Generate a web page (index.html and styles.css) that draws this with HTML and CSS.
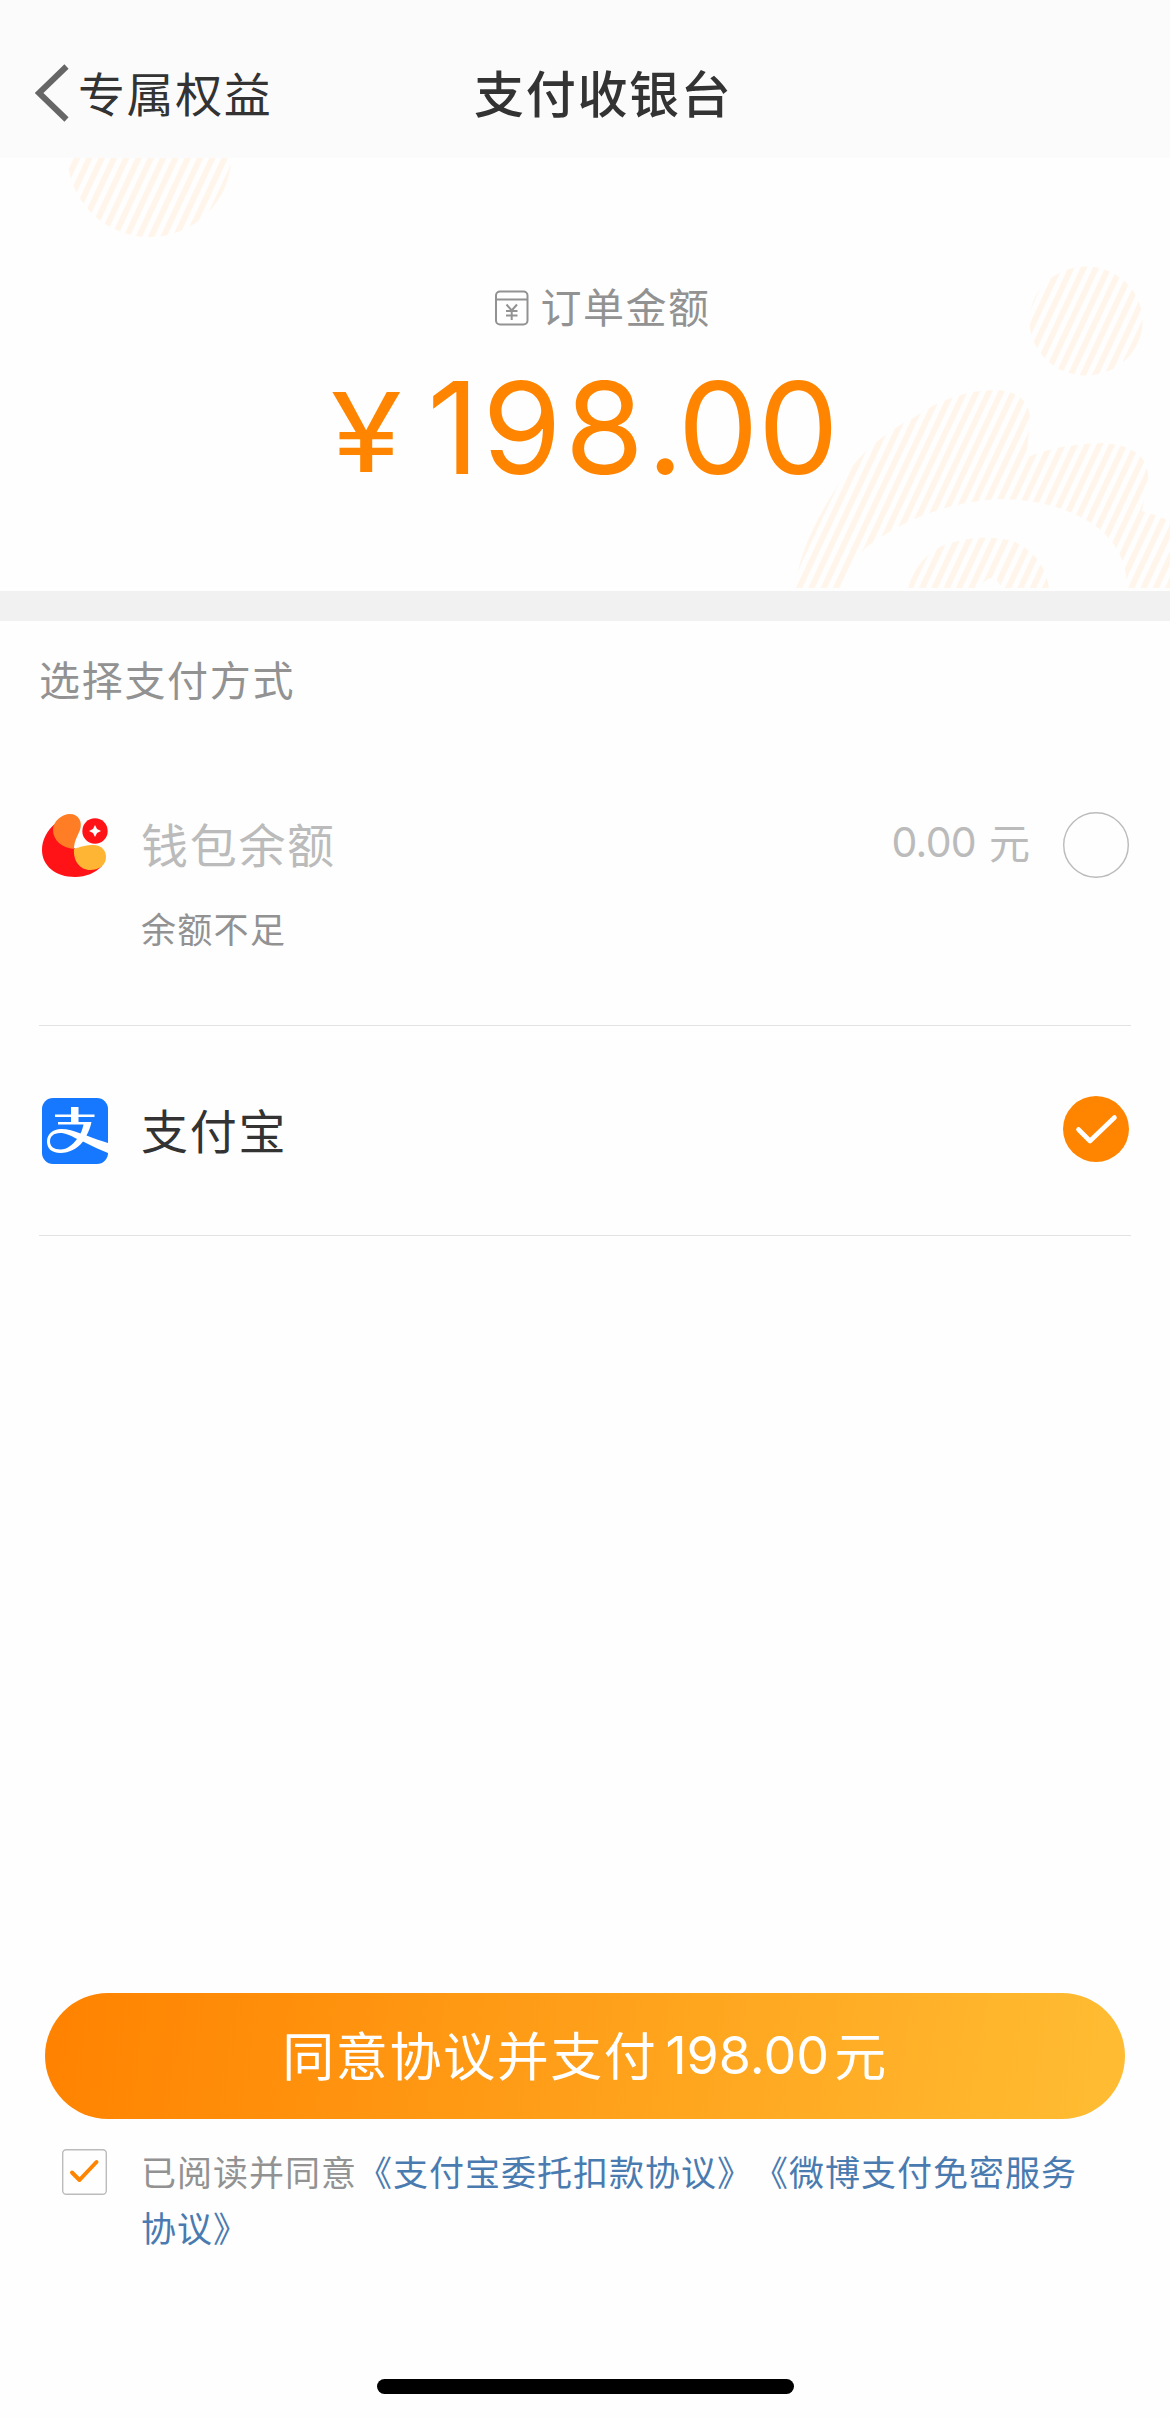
FILE: index.html
```html
<!DOCTYPE html>
<html lang="zh-CN">
<head>
<meta charset="utf-8">
<title>支付收银台</title>
<link rel="stylesheet" href="styles.css">
</head>
<body>
<div class="page">
  <header class="nav">
    <a class="back">
      <svg class="back-icon" viewBox="0 0 34 58"><path d="M31.500 2.500L4 29L31.500 55.500" fill="none" stroke="#666" stroke-width="6"/></svg>
      <span class="back-text">专属权益</span>
    </a>
    <h1 class="title">支付收银台</h1>
  </header>

  <section class="summary">
    <svg class="decor" viewBox="0 158 1170 430">
      <defs>
        <pattern id="stripes" width="12.300" height="20" patternUnits="userSpaceOnUse" patternTransform="skewX(-25)">
          <rect width="6.400" height="20" fill="#fff5ea"/>
        </pattern>
      </defs>
      <g fill="url(#stripes)">
        <circle cx="149.500" cy="155" r="82"/>
        <ellipse cx="1086" cy="321" rx="56.500" ry="54.500"/>
        <path d="M795 588Q799 548 833 493Q864 442 915 417Q952 391 993 390Q1032 390 1030 425Q1027 444 1027 457Q1065 443 1103 443Q1150 446 1148 480L1142 511Q1158 515 1170 522V588H1127Q1127 548 1093 524Q1053 499 1000 499Q925 503 865 548Q853 565 842 588Z"/>
        <path d="M908 588Q918 557 942 546Q978 532 1013 541Q1045 556 1049 588H1001Q998 578 990 578Q983 581 980 588Z"/>
      </g>
    </svg>
    <div class="order-label">
      <svg class="order-icon" viewBox="0 0 34 36" fill="none" stroke="#929292" stroke-width="2">
        <rect x="1" y="1.500" width="31.500" height="33" rx="4"/>
        <path d="M1 9.500H32.500M11.500 14.500L16.700 20.500L22 14.500M16.700 20.500V30M11 21H22.500M11 25.500H22.500"/>
      </svg>
      <span class="order-text">订单金额</span>
    </div>
    <div class="amount"><span class="yen">¥</span><span class="sum"><span class="sum-int">198</span><span class="sum-dot">.</span><span class="sum-dec">00</span></span></div>
  </section>

  <main class="methods">
    <h2 class="methods-title">选择支付方式</h2>
    <div class="method wallet">
      <svg class="logo" viewBox="0 0 66 66">
        <path d="M14 9C5 16 0 26 0 36C0 52 14 63 33 63C44 63 53 59 60 52L32 34Z" fill="#ff1316"/>
        <path d="M28 0C36 0 41 7 38 16C35 23 32 28 32 35C20 34 11 26 11 16C11 7 20 0 28 0Z" fill="#ff7d25"/>
        <path d="M32 35C38 33 44 31 51 31C60 31 64 37 64 43C64 52 56 56 48 56C38 56 31 47 32 35Z" fill="#ffb534"/>
        <circle cx="53" cy="17" r="12.700" fill="#ff1316"/>
        <path d="M53 11L55 15L59 17L55 19L53 23L51 19L47 17L51 15Z" fill="#fff"/>
      </svg>
      <div class="method-info">
        <span class="method-name">钱包余额</span>
        <span class="method-note">余额不足</span>
      </div>
      <div class="balance"><span class="balance-num">0.00</span><span class="balance-unit">元</span></div>
      <svg class="radio" viewBox="0 0 66 66"><circle cx="33" cy="33" r="32.300" fill="none" stroke="#bbb" stroke-width="1.400"/></svg>
    </div>
    <div class="method alipay">
      <svg class="logo" viewBox="0 0 66 66">
        <rect width="66" height="66" rx="11" fill="#1678ff"/>
        <path d="M29 9H36.500V16.500H52.500V19H36.500V24H49.500C48.500 29 46.500 34 44.500 37.500C51 40 59 43 66 45V55C57 51.500 49 47.500 41 43.500C35 51 27 55 18.500 55C9 55 5 50 5 43.500C5 36 11 31 19 31C26 31 32 33 38.500 35.500C40 32.500 41 29 41.500 26.500H16V24H29V19H13V16.500H29ZM18 35C11.500 35 8 38.500 8 43.500C8 48.500 12 51.500 18.500 51.500C25 51.500 31 46.500 35 41C28.500 37.500 23.500 35 18 35Z" fill="#fff"/>
      </svg>
      <div class="method-info">
        <span class="method-name">支付宝</span>
      </div>
      <svg class="radio" viewBox="0 0 66 66"><circle cx="33" cy="33" r="33" fill="#ff8500"/><path d="M15.500 33.500L27 45L51.500 21.500" fill="none" stroke="#fff" stroke-width="4.600" stroke-linecap="round" stroke-linejoin="round"/></svg>
    </div>
  </main>

  <footer class="footer">
    <button class="pay"><span>同意协议并支付</span><span class="pay-num">198.00</span><span>元</span></button>
    <div class="agree">
      <svg class="checkbox" viewBox="0 0 45 46" fill="none"><rect x=".7" y=".7" width="43.600" height="44.600" rx="3.500" stroke="#bbb" stroke-width="1.400"/><path d="M10 23.500L17.500 31L34.500 13" stroke="#ff8500" stroke-width="4" stroke-linecap="round" stroke-linejoin="round"/></svg>
      <p class="terms">已阅读并同意<a>《支付宝委托扣款协议》</a><a>《微博支付免密服务协议》</a></p>
    </div>
    <div class="home-bar"></div>
  </footer>
</div>
</body>
</html>
```

FILE: styles.css
```css
* { box-sizing: border-box; margin: 0; padding: 0; }
body {
  background: #fff;
  color: #333;
  font-family: "Noto Sans CJK SC", sans-serif;
  text-spacing-trim: space-all;
}
svg { display: block; flex: none; }
.page {
  width: 1170px;
  height: 2418px;
  display: flex;
  flex-direction: column;
  background: #fefefe;
  overflow: hidden;
}
.nav {
  height: 158px;
  flex: none;
  display: grid;
  grid-template-columns: 474px 1fr;
  align-items: start;
  background: #fcfbfc;
}
.back { display: flex; align-items: flex-start; padding: 62px 0 0 35px; }
.back-icon { width: 34px; height: 58px; margin-top: 2px; }
.back-text {
  margin-left: 9px;
  font-size: 47px;
  line-height: 60px;
  letter-spacing: 1.6px;
}
.title {
  padding-top: 61px;
  font-size: 50px;
  line-height: 60px;
  font-weight: 500;
  letter-spacing: 1.7px;
}
.summary {
  position: relative;
  height: 433px;
  flex: none;
  display: flex;
  flex-direction: column;
  align-items: center;
}
.decor { position: absolute; left: 0; top: 0; width: 1170px; height: 430px; }
.order-label {
  position: relative;
  display: flex;
  align-items: flex-start;
  margin: 117px 0 0 35px;
  gap: 12px;
  height: 62px;
  font-size: 41px;
  line-height: 60px;
  letter-spacing: 1.5px;
  color: #929292;
}
.order-icon { width: 34px; height: 36px; margin-top: 15px; }
.amount {
  position: relative;
  display: flex;
  align-items: baseline;
  font-family: Inter, sans-serif;
  color: #ff8500;
  line-height: 156px;
  margin: 13px 0 0 4px;
}
.yen { font-size: 110px; transform: translateY(-2px) scaleX(1.18); margin-right: 31px; }
.sum { font-size: 128px; }
.sum-int { letter-spacing: 3px; }
.sum-dot { letter-spacing: -6px; }
.sum-dec { letter-spacing: -0.5px; }
.methods {
  flex: none;
  border-top: 30px solid #f1f1f1;
  padding: 0 39px;
}
.methods-title {
  height: 90px;
  padding-top: 27px;
  font-size: 41px;
  line-height: 60px;
  font-weight: 400;
  letter-spacing: 1.7px;
  color: #929292;
}
.method {
  display: flex;
  align-items: flex-start;
  padding: 0 2px 0 3px;
  border-bottom: 1px solid #e2e2e2;
}
.wallet { height: 315px; padding-top: 101px; }
.alipay { height: 210px; padding-top: 70px; }
.logo { width: 66px; height: 66px; margin-top: 2px; }
.method-info {
  flex: 1;
  display: flex;
  flex-direction: column;
  margin-left: 33px;
}
.method-name { font-size: 47px; line-height: 66px; letter-spacing: 1.7px; }
.wallet .method-name { margin-top: -2px; }
.method-note {
  font-size: 35px;
  line-height: 50px;
  letter-spacing: 1.3px;
  color: #929292;
  margin-top: 27px;
}
.wallet .method-name, .balance { color: #bbb; }
.balance { display: flex; gap: 13px; font-size: 41px; line-height: 60px; margin: -1px 33px 0 0; }
.balance-num { font-family: Inter, sans-serif; font-size: 41px; letter-spacing: -0.7px; margin-top: 1px; }
.radio { width: 66px; height: 66px; }
.footer {
  margin-top: auto;
  height: 425px;
  flex: none;
  padding: 0 45px;
  display: flex;
  flex-direction: column;
}
.pay {
  height: 126px;
  padding-bottom: 4px;
  border: 0;
  border-radius: 63px;
  background: linear-gradient(100deg, #ff8200, #ffbd33);
  color: #fff;
  font-family: inherit;
  font-size: 52px;
  line-height: 80px;
  letter-spacing: 1.6px;
  display: flex;
  align-items: center;
  justify-content: center;
}
.pay-num { font-family: Inter, sans-serif; letter-spacing: 0; margin: 4px 5px 0 8px; }
.agree { display: flex; align-items: flex-start; margin-top: 24px; padding-left: 17px; }
.checkbox { width: 45px; height: 46px; margin-top: 6px; }
.terms {
  margin-left: 34px;
  width: 960px;
  font-size: 35px;
  line-height: 56px;
  letter-spacing: 1px;
  color: #929292;
}
.terms a { color: #4a7bb0; }
.home-bar {
  width: 417px;
  height: 15px;
  margin: auto 0 24px 332px;
  border-radius: 8px;
  background: #000;
}
```
